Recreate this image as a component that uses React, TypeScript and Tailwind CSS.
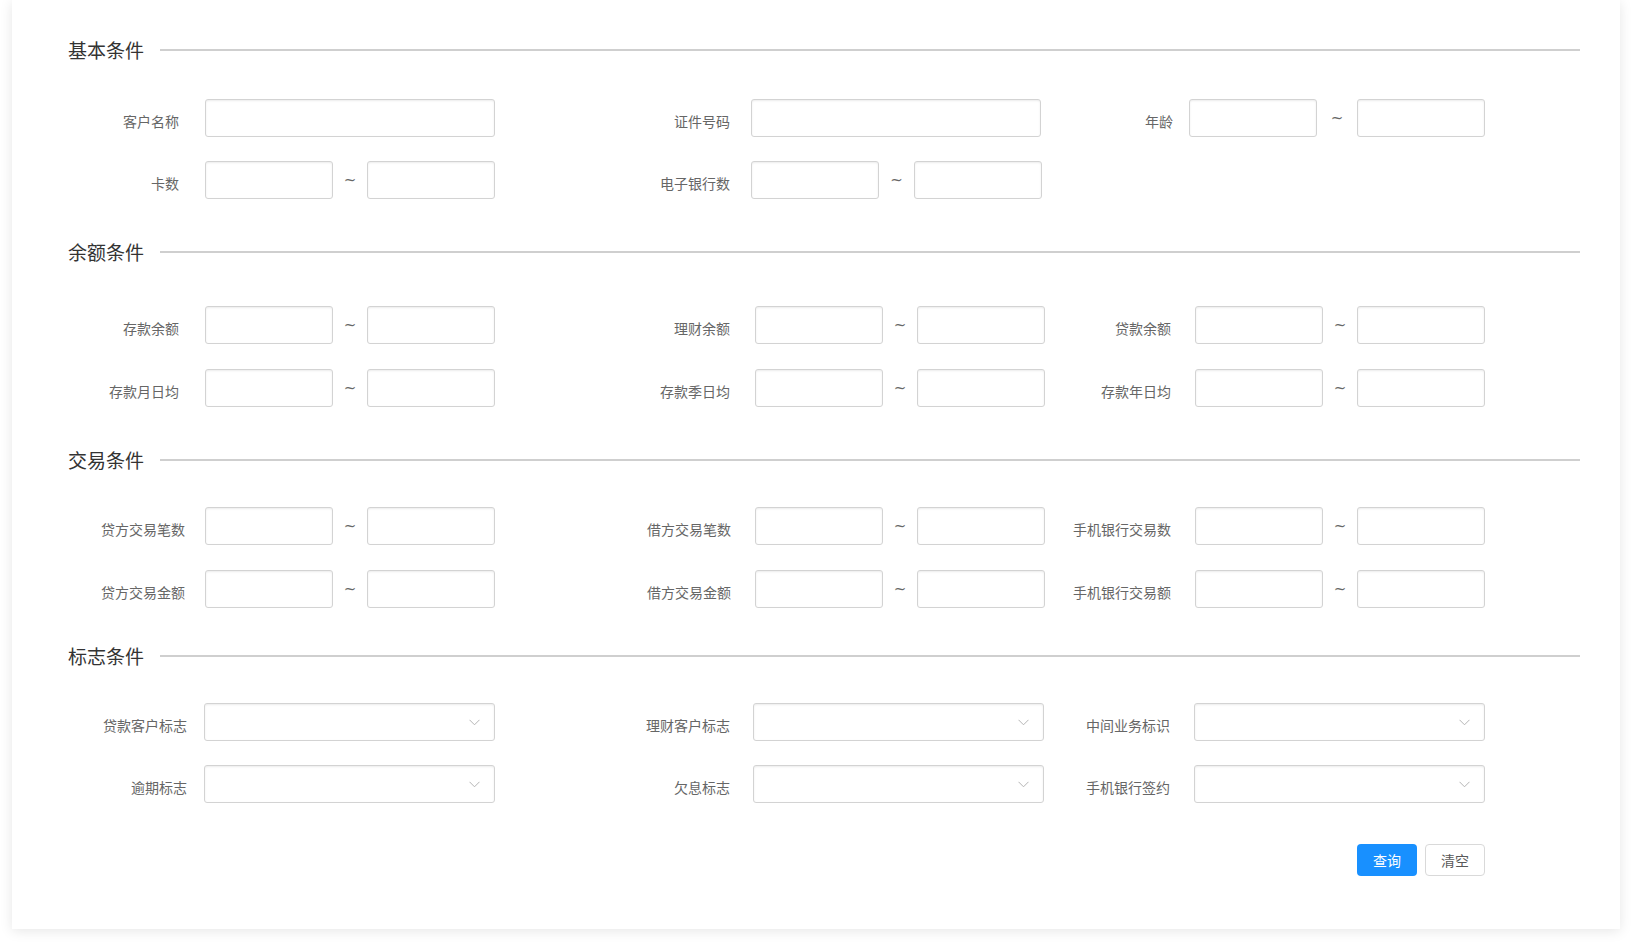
type Kind = 'text' | 'range' | 'select';

interface Field {
  label: string;
  kind: Kind;
}

interface Section {
  title: string;
  // spacing in px between title block and first row, and between rows
  top: string;
  rowGap: string;
  after: string;
  labelW: [string, string, string];
  ctrlMl: [string, string, string];
  rangeW?: [string, string, string];
  rows: Field[][];
}

const SECTIONS: Section[] = [
  {
    title: '基本条件',
    top: 'mt-[37px]',
    rowGap: 'gap-[24px]',
    after: 'mt-[41px]',
    labelW: ['w-[111px]', 'w-[235px]', 'w-[130px]'],
    ctrlMl: ['ml-[26px]', 'ml-[21px]', 'ml-[16px]'],
    rangeW: ['w-[290px]', 'w-[291px]', 'w-[296px]'],
    rows: [
      [
        { label: '客户名称', kind: 'text' },
        { label: '证件号码', kind: 'text' },
        { label: '年龄', kind: 'range' },
      ],
      [
        { label: '卡数', kind: 'range' },
        { label: '电子银行数', kind: 'range' },
      ],
    ],
  },
  {
    title: '余额条件',
    top: 'mt-[42px]',
    rowGap: 'gap-[25px]',
    after: 'mt-[41px]',
    labelW: ['w-[111px]', 'w-[235px]', 'w-[128px]'],
    ctrlMl: ['ml-[26px]', 'ml-[25px]', 'ml-[24px]'],
    rows: [
      [
        { label: '存款余额', kind: 'range' },
        { label: '理财余额', kind: 'range' },
        { label: '贷款余额', kind: 'range' },
      ],
      [
        { label: '存款月日均', kind: 'range' },
        { label: '存款季日均', kind: 'range' },
        { label: '存款年日均', kind: 'range' },
      ],
    ],
  },
  {
    title: '交易条件',
    top: 'mt-[35px]',
    rowGap: 'gap-[25px]',
    after: 'mt-[36px]',
    labelW: ['w-[117px]', 'w-[236px]', 'w-[128px]'],
    ctrlMl: ['ml-[20px]', 'ml-[24px]', 'ml-[24px]'],
    rows: [
      [
        { label: '贷方交易笔数', kind: 'range' },
        { label: '借方交易笔数', kind: 'range' },
        { label: '手机银行交易数', kind: 'range' },
      ],
      [
        { label: '贷方交易金额', kind: 'range' },
        { label: '借方交易金额', kind: 'range' },
        { label: '手机银行交易额', kind: 'range' },
      ],
    ],
  },
  {
    title: '标志条件',
    top: 'mt-[35px]',
    rowGap: 'gap-[24px]',
    after: 'mt-[41px]',
    labelW: ['w-[119px]', 'w-[235px]', 'w-[127px]'],
    ctrlMl: ['ml-[17px]', 'ml-[23px]', 'ml-[24px]'],
    rows: [
      [
        { label: '贷款客户标志', kind: 'select' },
        { label: '理财客户标志', kind: 'select' },
        { label: '中间业务标识', kind: 'select' },
      ],
      [
        { label: '逾期标志', kind: 'select' },
        { label: '欠息标志', kind: 'select' },
        { label: '手机银行签约', kind: 'select' },
      ],
    ],
  },
];

const CELL_W = ['w-[427px]', 'w-[548px]', 'flex-1'];

const boxCls =
  'h-[38px] bg-white border border-[#d3d3d3] rounded-[3px] shadow-[inset_0_1px_2px_rgba(0,0,0,0.08)]';

function Control({ kind, rangeW }: { kind: Kind; rangeW: string }) {
  if (kind === 'text') {
    return <input className={`${boxCls} w-[290px] px-3 text-sm outline-none`} />;
  }
  if (kind === 'select') {
    return (
      <div className={`${boxCls} relative w-[291px]`}>
        <svg className="absolute right-[14px] top-[15px]" width="11" height="7" viewBox="0 0 11 7" fill="none">
          <path d="M0.5 0.8 L5.5 5.8 L10.5 0.8" stroke="#b4b4b4" strokeWidth="1" />
        </svg>
      </div>
    );
  }
  return (
    <div className={`${rangeW} flex items-center`}>
      <input className={`${boxCls} w-[128px] px-2 text-sm outline-none`} />
      <span className="flex-1 text-center text-[15px] leading-none text-[#666] font-['DejaVu_Sans',sans-serif]">~</span>
      <input className={`${boxCls} w-[128px] px-2 text-sm outline-none`} />
    </div>
  );
}

function SectionBlock({ s }: { s: Section }) {
  return (
    <div>
      <div className="h-[24px] flex items-center">
        <h2 className="text-[19px] leading-[24px] text-[#333] font-normal">{s.title}</h2>
        <div className="flex-1 h-[2px] bg-[#cfcfcf] ml-[16px]" />
      </div>
      <div className={`${s.top} flex flex-col ${s.rowGap}`}>
        {s.rows.map((row, ri) => (
          <div key={ri} className="flex">
            {row.map((f, ci) => (
              <div key={f.label} className={`${CELL_W[ci]} flex shrink-0`}>
                <label className={`${s.labelW[ci]} shrink-0 h-[38px] pt-[7px] flex items-center justify-end text-[14px] text-[#666] whitespace-nowrap`}>
                  {f.label}
                </label>
                <div className={s.ctrlMl[ci]}>
                  <Control kind={f.kind} rangeW={s.rangeW ? s.rangeW[ci] : 'w-[290px]'} />
                </div>
              </div>
            ))}
          </div>
        ))}
      </div>
    </div>
  );
}

export default function App() {
  return (
    <div className="min-h-screen bg-white font-['Noto_Sans_CJK_SC','Noto_Sans',sans-serif]">
      <div className="mx-[12px] bg-white shadow-[0_2px_12px_0_rgba(0,0,0,0.1)] pt-[38px] pb-[53px] pl-[56px] pr-[40px]">
        {SECTIONS.map((s, i) => (
          <div key={s.title}>
            <SectionBlock s={s} />
            {i < SECTIONS.length - 1 && <div className={s.after} />}
            {i === SECTIONS.length - 1 && (
              <div className={`${s.after} flex justify-end gap-[8px] mr-[95px]`}>
                <button className="w-[60px] h-[32px] rounded-[4px] bg-[#1890ff] text-white text-[14px]">查询</button>
                <button className="w-[60px] h-[32px] rounded-[4px] bg-white border border-[#d9d9d9] text-[#595959] text-[14px]">清空</button>
              </div>
            )}
          </div>
        ))}
      </div>
    </div>
  );
}
